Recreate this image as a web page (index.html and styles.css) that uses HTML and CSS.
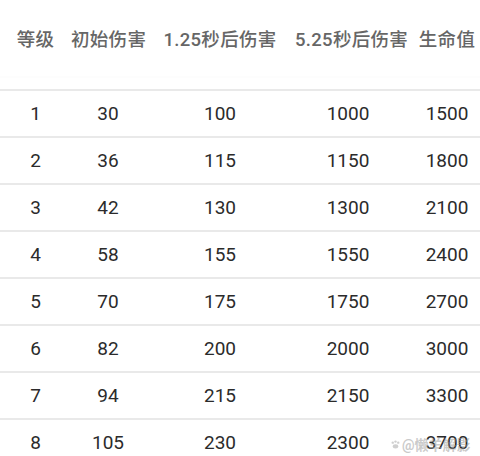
FILE: index.html
```html
<!DOCTYPE html>
<html lang="zh">
<head>
<meta charset="utf-8">
<link rel="stylesheet" href="styles.css">
</head>
<body>
<div class="table">
  <div class="row head">
    <div>等级</div><div>初始伤害</div><div>1.25秒后伤害</div><div>5.25秒后伤害</div><div>生命值</div>
  </div>
  <div class="row"><div>1</div><div>30</div><div>100</div><div>1000</div><div>1500</div></div>
  <div class="row"><div>2</div><div>36</div><div>115</div><div>1150</div><div>1800</div></div>
  <div class="row"><div>3</div><div>42</div><div>130</div><div>1300</div><div>2100</div></div>
  <div class="row"><div>4</div><div>58</div><div>155</div><div>1550</div><div>2400</div></div>
  <div class="row"><div>5</div><div>70</div><div>175</div><div>1750</div><div>2700</div></div>
  <div class="row"><div>6</div><div>82</div><div>200</div><div>2000</div><div>3000</div></div>
  <div class="row"><div>7</div><div>94</div><div>215</div><div>2150</div><div>3300</div></div>
  <div class="row last"><div>8</div><div>105</div><div>230</div><div>2300</div><div class="wm-cell">3700<span class="watermark"><svg class="paw" viewBox="0 0 12 12" width="11" height="11"><circle cx="3" cy="4" r="1.3"/><circle cx="6" cy="2.8" r="1.3"/><circle cx="9" cy="4" r="1.3"/><ellipse cx="6" cy="8" rx="3" ry="2.4"/></svg>@懒羊解影</span></div></div>
</div>
</body>
</html>
```
FILE: styles.css
```css
html, body {
  margin: 0;
  padding: 0;
  background: #ffffff;
  width: 480px;
  height: 456px;
  overflow: hidden;
}
body {
  font-family: Roboto, "Noto Sans CJK SC", sans-serif;
}
.table {
  width: 493px;
}
.row {
  display: grid;
  grid-template-columns: 71px 74px 150px 106px 92px;
  height: 47px;
  align-items: center;
  border-top: 2px solid #e9e9e9;
  box-sizing: border-box;
  font-size: 19px;
  color: #2b2b2b;
}
.row > div {
  text-align: center;
  white-space: nowrap;
}
.head {
  height: 89px;
  border-top: none;
  align-items: start;
  padding-top: 25px;
  font-size: 18.5px;
  font-weight: 500;
  color: #666666;
  background: linear-gradient(#fff 76px, #fbfbfb 77px, #fff 78px);
}
.head > div {
  letter-spacing: 0.3px;
}
.wm-cell {
  position: relative;
}
.watermark {
  position: absolute;
  left: -11px;
  top: 3px;
  display: flex;
  align-items: center;
  gap: 1px;
  font-size: 14px;
  color: rgba(150,150,150,0.5);
  font-weight: 700;
}
.paw {
  fill: rgba(160,160,160,0.5);
}
```
